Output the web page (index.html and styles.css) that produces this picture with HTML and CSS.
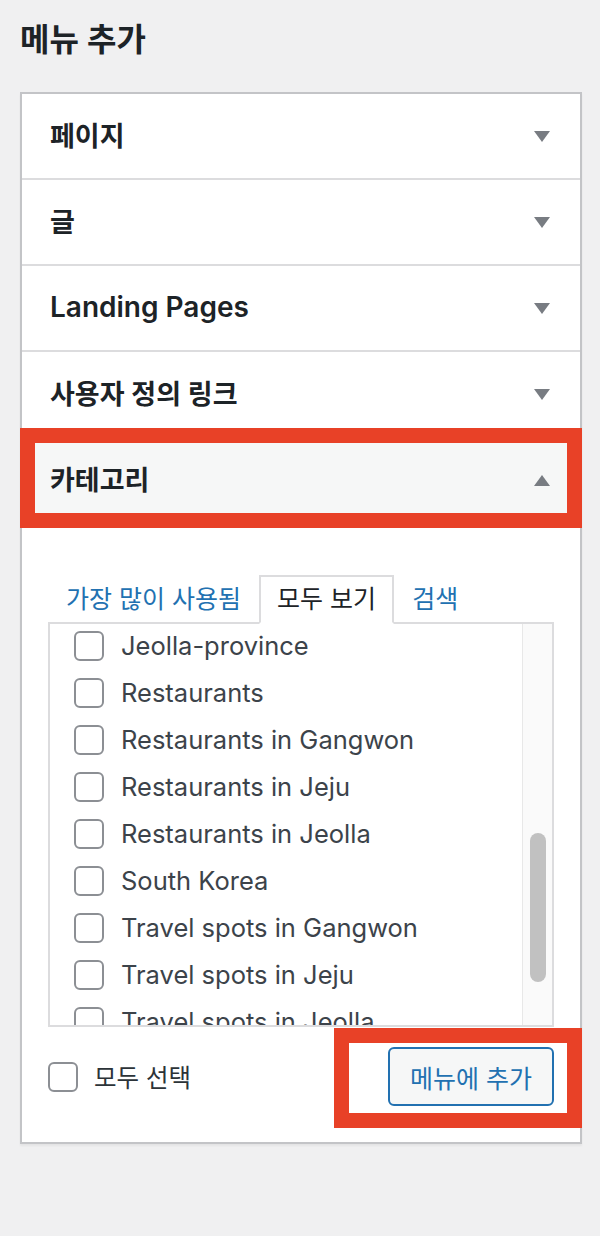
FILE: index.html
```html
<!DOCTYPE html>
<html lang="ko">
<head>
  <meta charset="UTF-8" />
  <meta name="viewport" content="width=device-width, initial-scale=1.0"/>
  <title>메뉴 추가</title>
  <link rel="stylesheet" href="styles.css">
</head>
<body>

  <h2 class="page-title">메뉴 추가</h2>

  <div class="menu-panel">
    <div class="menu-section">
      <h3 class="section-title">페이지<span class="toggle-arrow"></span></h3>
    </div>
    <div class="menu-section">
      <h3 class="section-title">글<span class="toggle-arrow"></span></h3>
    </div>
    <div class="menu-section">
      <h3 class="section-title" lang="en">Landing Pages<span class="toggle-arrow"></span></h3>
    </div>
    <div class="menu-section">
      <h3 class="section-title">사용자 정의 링크<span class="toggle-arrow"></span></h3>
    </div>

    <!-- Open section: categories -->
    <div class="menu-section open">
      <h3 class="section-title">카테고리<span class="toggle-arrow"></span></h3>
      <div class="section-body">
        <ul class="tabs">
          <li><a href="#">가장 많이 사용됨</a></li>
          <li class="active"><a href="#">모두 보기</a></li>
          <li><a href="#">검색</a></li>
        </ul>

        <div class="checklist-box">
          <ul class="checklist" lang="en">
            <li><input type="checkbox"> Jeolla-province</li>
            <li><input type="checkbox"> Restaurants</li>
            <li><input type="checkbox"> Restaurants in Gangwon</li>
            <li><input type="checkbox"> Restaurants in Jeju</li>
            <li><input type="checkbox"> Restaurants in Jeolla</li>
            <li><input type="checkbox"> South Korea</li>
            <li><input type="checkbox"> Travel spots in Gangwon</li>
            <li><input type="checkbox"> Travel spots in Jeju</li>
            <li><input type="checkbox"> Travel spots in Jeolla</li>
          </ul>
          <div class="scroll-track"><div class="scroll-thumb"></div></div>
        </div>

        <div class="button-row">
          <label class="select-all"><input type="checkbox"> 모두 선택</label>
          <button type="button" class="add-button">메뉴에 추가</button>
        </div>
      </div>
    </div>

    <!-- Red annotation boxes -->
    <div class="highlight highlight-title"></div>
    <div class="highlight highlight-button"></div>
  </div>

</body>
</html>
```

FILE: styles.css
```css
body {
  margin: 0;
  padding: 0 18px 40px 20px;
  background: #f0f0f1;
  font-family: Inter, "Noto Sans CJK KR", sans-serif;
  color: #1d2327;
}

.page-title {
  margin: 20px 0 32px;
  font-size: 32px;
  line-height: 40px;
  font-weight: 600;
}

.menu-panel {
  position: relative;
  width: 562px;
  box-sizing: border-box;
  border: 2px solid #c3c4c7;
  background: #fff;
  box-shadow: 0 2px 2px rgba(0, 0, 0, 0.05);
}

.section-title {
  margin: 0;
  height: 86px;
  box-sizing: border-box;
  border-bottom: 2px solid #dcdcde;
  padding: 0 30px 3px 28px;
  display: flex;
  align-items: center;
  justify-content: space-between;
  font-size: 27px;
  font-weight: 600;
}
.section-title:lang(en) {
  font-size: 28px;
}

.toggle-arrow {
  width: 0;
  height: 0;
  margin-top: 3px;
  border-left: 8px solid transparent;
  border-right: 8px solid transparent;
  border-top: 11px solid #787c82;
}

.open .section-title {
  background: #f6f7f7;
}
.open .toggle-arrow {
  border-top: 0;
  border-bottom: 11px solid #787c82;
}

.section-body {
  padding: 51px 26px 36px;
}

/* tabs */
.tabs {
  display: flex;
  margin: 0 0 -2px;
  padding: 0;
  list-style: none;
  font-size: 25px;
}
.tabs li {
  position: relative;
  z-index: 1;
  height: 49px;
  box-sizing: border-box;
  border: 2px solid transparent;
  padding: 0 16px;
  line-height: 44px;
}
.tabs li.active {
  border-color: #dcdcde;
  border-bottom-color: #fff;
  background: #fff;
}
.tabs a {
  color: #2271b1;
  text-decoration: none;
}
.tabs li.active a {
  color: #1d2327;
}

/* checklist */
.checklist-box {
  display: flex;
  height: 405px;
  box-sizing: border-box;
  border: 2px solid #dcdcde;
  background: #fff;
  overflow: hidden;
}
.checklist {
  flex: 1;
  margin: -2px 0 0;
  padding: 0 0 0 24px;
  list-style: none;
  font-size: 25.5px;
  color: #3c434a;
  overflow: hidden;
}
.checklist li {
  height: 47px;
  display: flex;
  align-items: center;
  gap: 17px;
  white-space: nowrap;
}

input[type="checkbox"] {
  appearance: none;
  -webkit-appearance: none;
  flex-shrink: 0;
  width: 30px;
  height: 30px;
  margin: 0;
  border: 2px solid #8c8f94;
  border-radius: 6px;
  background: #fff;
}

.scroll-track {
  width: 29px;
  border-left: 1px solid #e8e8e8;
  background: #fafafa;
}
.scroll-thumb {
  width: 16px;
  height: 149px;
  margin: 209px 0 0 7px;
  border-radius: 8px;
  background: #c1c1c1;
}

/* bottom actions */
.button-row {
  display: flex;
  align-items: center;
  justify-content: space-between;
  margin-top: 20px;
}
.select-all {
  display: flex;
  align-items: center;
  gap: 16px;
  font-size: 24.5px;
  color: #2c3338;
}
.add-button {
  height: 59px;
  padding: 0 20px;
  border: 2px solid #2271b1;
  border-radius: 6px;
  background: #f6f7f7;
  color: #2271b1;
  font-family: inherit;
  font-size: 25px;
  cursor: pointer;
}

/* annotation boxes */
.highlight {
  position: absolute;
  height: 100px;
  box-sizing: border-box;
  border: 15px solid #e84127;
}
.highlight-title {
  top: 334px;
  left: -2px;
  width: 562px;
}
.highlight-button {
  top: 934px;
  left: 312px;
  width: 248px;
}
```
